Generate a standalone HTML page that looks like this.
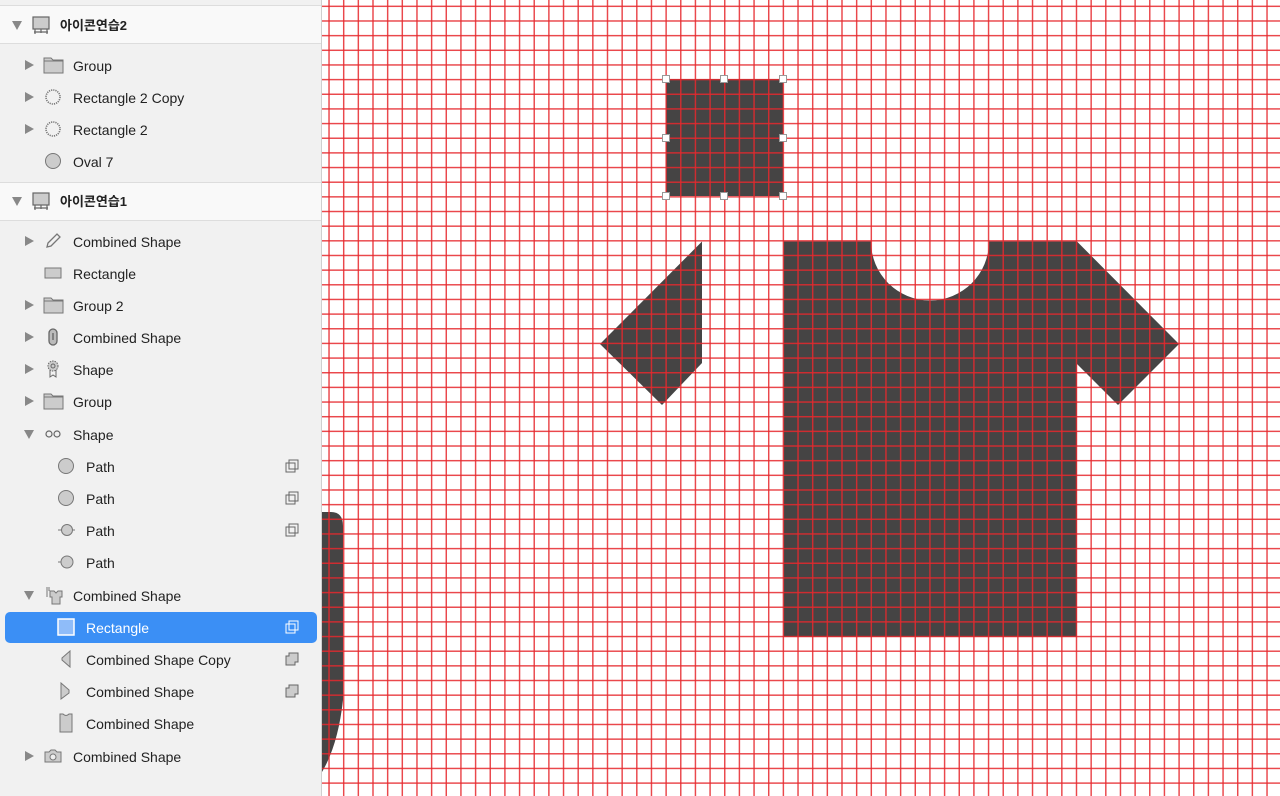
<!DOCTYPE html>
<html><head><meta charset="utf-8"><style>
body{margin:0;width:1280px;height:796px;overflow:hidden;position:relative;font-family:"Liberation Sans","Noto Sans CJK KR",sans-serif;background:#fff}
#side{position:absolute;left:0;top:0;width:321px;height:796px;background:#f1f1f1;border-right:1px solid #cfcfcf}
.hdr{position:absolute;left:0;width:321px;height:37px;background:#f9f9f9;border-top:1px solid #ddd;border-bottom:1px solid #ddd}
.row{position:absolute;left:0;width:321px;height:32px;font-size:14px;color:#222;line-height:32px}
.row .t{position:absolute;top:1px}
.tri{position:absolute;width:0;height:0}
.tr{border-top:5px solid transparent;border-bottom:5px solid transparent;border-left:9px solid #888}
.td{border-left:5px solid transparent;border-right:5px solid transparent;border-top:9px solid #888}
.ic{position:absolute}
.sel{position:absolute;left:5px;top:612px;width:312px;height:31px;background:#3b8ff5;border-radius:5px}
#cv{position:absolute;left:322px;top:0;width:958px;height:796px;overflow:hidden}
#grid{position:absolute;left:0;top:0;width:958px;height:796px;
background-image:linear-gradient(to right,rgba(230,40,45,.85) 1.3px,transparent 1.3px),linear-gradient(to bottom,rgba(230,40,45,.85) 1.3px,transparent 1.3px);
background-size:14.667px 14.667px;background-position:6.3px 5.6px}
.h{position:absolute;width:6px;height:6px;background:#fff;border:1px solid #999}
</style></head><body>
<div id="cv">
<svg width="958" height="796" style="position:absolute;left:0;top:0">
<g fill="#454444" transform="translate(-322,0)">
<rect x="666" y="79" width="117" height="117"/>
<path d="M783.5 241.5H871A59 59 0 0 0 989 241.5H1077L1179 344L1118 405L1077 364V637H783.5Z"/>
<path d="M702 241.5L600 344L662 405L702 363Z"/>
<path d="M322 512H331Q343 512 343 526V700Q338 745 322 772Z"/>
</g></svg>
<div id="grid"></div>
</div>
<div class="h" style="left:662px;top:75px"></div><div class="h" style="left:720px;top:75px"></div><div class="h" style="left:779px;top:75px"></div>
<div class="h" style="left:662px;top:134px"></div><div class="h" style="left:779px;top:134px"></div>
<div class="h" style="left:662px;top:192px"></div><div class="h" style="left:720px;top:192px"></div><div class="h" style="left:779px;top:192px"></div>

<div id="side">
<div class="hdr" style="top:5px"></div>
<div class="hdr" style="top:182px"></div>
<div class="sel"></div>
<div class="row" style="top:9px;font-weight:bold;font-size:13px"><div class="tri td" style="left:12px;top:12px"></div>
<svg class="ic" style="left:31px;top:6px" width="20" height="20"><rect x="2" y="2" width="16" height="12" fill="#ccc" stroke="#666" stroke-width="1.2"/><path d="M4 14v5M16 14v5M10 14v4M3 17h14" stroke="#666" stroke-width="1.2" fill="none"/></svg>
<span class="t" style="left:60px">아이콘연습2</span></div>
<div class="row" style="top:185px;font-weight:bold;font-size:13px"><div class="tri td" style="left:12px;top:12px"></div>
<svg class="ic" style="left:31px;top:6px" width="20" height="20"><rect x="2" y="2" width="16" height="12" fill="#ccc" stroke="#666" stroke-width="1.2"/><path d="M4 14v5M16 14v5M10 14v4M3 17h14" stroke="#666" stroke-width="1.2" fill="none"/></svg>
<span class="t" style="left:60px">아이콘연습1</span></div>

<div class="row" style="top:49px"><div class="tri tr" style="left:25px;top:11px"></div><svg class="ic" style="left:43px;top:7px" width="22" height="18"><path d="M1 2h7l2 2h10v13H1z" fill="#ccc" stroke="#777"/><path d="M1 5h19" stroke="#777"/></svg><span class="t" style="left:73px">Group</span></div>
<div class="row" style="top:81px"><div class="tri tr" style="left:25px;top:11px"></div><svg class="ic" style="left:44px;top:7px" width="18" height="18"><circle cx="9" cy="9" r="7" fill="none" stroke="#777" stroke-width="1.6" stroke-dasharray="1.2 1"/></svg><span class="t" style="left:73px">Rectangle 2 Copy</span></div>
<div class="row" style="top:113px"><div class="tri tr" style="left:25px;top:11px"></div><svg class="ic" style="left:44px;top:7px" width="18" height="18"><circle cx="9" cy="9" r="7" fill="none" stroke="#777" stroke-width="1.6" stroke-dasharray="1.2 1"/></svg><span class="t" style="left:73px">Rectangle 2</span></div>
<div class="row" style="top:145px"><svg class="ic" style="left:44px;top:7px" width="18" height="18"><circle cx="9" cy="9" r="7.5" fill="#ccc" stroke="#777"/></svg><span class="t" style="left:73px">Oval 7</span></div>

<div class="row" style="top:225px"><div class="tri tr" style="left:25px;top:11px"></div><svg class="ic" style="left:44px;top:7px" width="18" height="18"><path d="M3 15l1-4 9-9 3 3-9 9z" fill="none" stroke="#777" stroke-width="1.3"/></svg><span class="t" style="left:73px">Combined Shape</span></div>
<div class="row" style="top:257px"><svg class="ic" style="left:44px;top:9px" width="18" height="14"><rect x="1" y="2" width="16" height="10" fill="#ccc" stroke="#777"/></svg><span class="t" style="left:73px">Rectangle</span></div>
<div class="row" style="top:289px"><div class="tri tr" style="left:25px;top:11px"></div><svg class="ic" style="left:43px;top:7px" width="22" height="18"><path d="M1 2h7l2 2h10v13H1z" fill="#ccc" stroke="#777"/><path d="M1 5h19" stroke="#777"/></svg><span class="t" style="left:73px">Group 2</span></div>
<div class="row" style="top:321px"><div class="tri tr" style="left:25px;top:11px"></div><svg class="ic" style="left:46px;top:7px" width="14" height="18"><rect x="3" y="1" width="8" height="16" rx="4" fill="#bbb" stroke="#666" stroke-width="1.3"/><path d="M7 5v7" stroke="#444"/></svg><span class="t" style="left:73px">Combined Shape</span></div>
<div class="row" style="top:353px"><div class="tri tr" style="left:25px;top:11px"></div><svg class="ic" style="left:46px;top:7px" width="14" height="18"><circle cx="7" cy="6" r="5" fill="#ccc" stroke="#666" stroke-dasharray="1.5 1"/><circle cx="7" cy="6" r="2" fill="none" stroke="#666"/><path d="M4 10v7l3-2 3 2v-7" fill="none" stroke="#666"/></svg><span class="t" style="left:73px">Shape</span></div>
<div class="row" style="top:385px"><div class="tri tr" style="left:25px;top:11px"></div><svg class="ic" style="left:43px;top:7px" width="22" height="18"><path d="M1 2h7l2 2h10v13H1z" fill="#ccc" stroke="#777"/><path d="M1 5h19" stroke="#777"/></svg><span class="t" style="left:73px">Group</span></div>
<div class="row" style="top:418px"><div class="tri td" style="left:24px;top:12px"></div><svg class="ic" style="left:44px;top:10px" width="18" height="12"><circle cx="5" cy="6" r="3" fill="none" stroke="#666" stroke-width="1.2"/><circle cx="13" cy="6" r="3" fill="none" stroke="#666" stroke-width="1.2"/></svg><span class="t" style="left:73px">Shape</span></div>
<div class="row" style="top:450px"><svg class="ic" style="left:57px;top:7px" width="18" height="18"><circle cx="9" cy="9" r="7.5" fill="#ccc" stroke="#777"/></svg><span class="t" style="left:86px">Path</span><svg class="ic" style="left:285px;top:9px" width="14" height="14"><rect x="4" y="1" width="9" height="9" fill="#f1f1f1" stroke="#666"/><rect x="1" y="4" width="9" height="9" fill="none" stroke="#666"/></svg></div>
<div class="row" style="top:482px"><svg class="ic" style="left:57px;top:7px" width="18" height="18"><circle cx="9" cy="9" r="7.5" fill="#ccc" stroke="#777"/></svg><span class="t" style="left:86px">Path</span><svg class="ic" style="left:285px;top:9px" width="14" height="14"><rect x="4" y="1" width="9" height="9" fill="#f1f1f1" stroke="#666"/><rect x="1" y="4" width="9" height="9" fill="none" stroke="#666"/></svg></div>
<div class="row" style="top:514px"><svg class="ic" style="left:57px;top:7px" width="18" height="18"><circle cx="10" cy="9" r="5.5" fill="#ccc" stroke="#777"/><path d="M1 9h3M16 9h2" stroke="#777"/></svg><span class="t" style="left:86px">Path</span><svg class="ic" style="left:285px;top:9px" width="14" height="14"><rect x="4" y="1" width="9" height="9" fill="#f1f1f1" stroke="#666"/><rect x="1" y="4" width="9" height="9" fill="none" stroke="#666"/></svg></div>
<div class="row" style="top:546px"><svg class="ic" style="left:57px;top:7px" width="18" height="18"><circle cx="10" cy="9" r="6" fill="#ccc" stroke="#777"/><path d="M1 9h3" stroke="#777"/></svg><span class="t" style="left:86px">Path</span></div>
<div class="row" style="top:579px"><div class="tri td" style="left:24px;top:12px"></div><svg class="ic" style="left:44px;top:6px" width="20" height="20"><path d="M6 6h4l2 2 2-2h4v6h-2v7H8v-7H6z" fill="#ccc" stroke="#777"/><path d="M3 2v10M5 2v4" stroke="#777"/></svg><span class="t" style="left:73px">Combined Shape</span></div>
<div class="row" style="top:611px;color:#fff"><svg class="ic" style="left:57px;top:7px" width="18" height="18"><rect x="1" y="1" width="16" height="16" fill="#8fbcf9" stroke="#fff" stroke-width="1.5"/></svg><span class="t" style="left:86px">Rectangle</span><svg class="ic" style="left:285px;top:9px" width="14" height="14"><rect x="4" y="1" width="9" height="9" fill="#3b8ff5" stroke="#fff"/><rect x="1" y="4" width="9" height="9" fill="none" stroke="#fff"/></svg></div>
<div class="row" style="top:643px"><svg class="ic" style="left:59px;top:7px" width="14" height="18"><path d="M11 1v16L3 10V8z" fill="#ccc" stroke="#777"/></svg><span class="t" style="left:86px">Combined Shape Copy</span><svg class="ic" style="left:285px;top:9px" width="14" height="14"><path d="M4 1h9v9H10v3H1V4h3z" fill="#ccc" stroke="#666"/></svg></div>
<div class="row" style="top:675px"><svg class="ic" style="left:59px;top:7px" width="14" height="18"><path d="M2 1v16l8-6V8z" fill="#ccc" stroke="#777"/></svg><span class="t" style="left:86px">Combined Shape</span><svg class="ic" style="left:285px;top:9px" width="14" height="14"><path d="M4 1h9v9H10v3H1V4h3z" fill="#ccc" stroke="#666"/></svg></div>
<div class="row" style="top:707px"><svg class="ic" style="left:59px;top:6px" width="14" height="20"><path d="M1 1h3q3 3 6 0h3v18H1z" fill="#ccc" stroke="#777"/></svg><span class="t" style="left:86px">Combined Shape</span></div>
<div class="row" style="top:740px"><div class="tri tr" style="left:25px;top:11px"></div><svg class="ic" style="left:44px;top:8px" width="18" height="16"><path d="M1 4h4l2-2h4l2 2h4v10H1z" fill="#ccc" stroke="#777"/><circle cx="9" cy="9" r="3" fill="#eee" stroke="#777"/></svg><span class="t" style="left:73px">Combined Shape</span></div>
</div>
</body></html>
